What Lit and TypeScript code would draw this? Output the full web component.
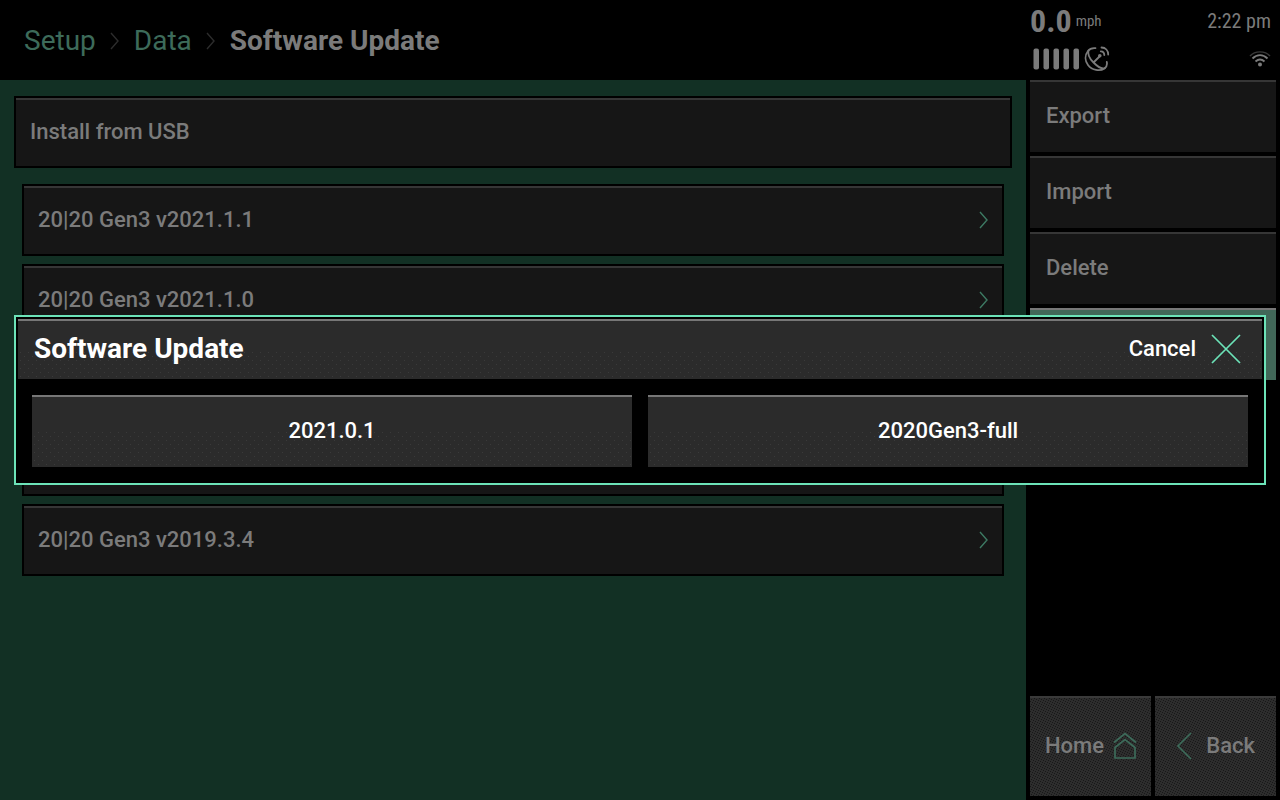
import { LitElement, html, css, svg } from "lit";
import { customElement } from "lit/decorators.js";

const chevron = svg`<path d="M1 1 L8 9 L1 17" fill="none" stroke="currentColor" stroke-width="1.400"/>`;

@customElement("app-root")
export class AppRoot extends LitElement {
  static styles = css`
    :host {
      display: block;
      font-family: Roboto, "Liberation Sans", sans-serif;
      color: #7b7b7b;
      background: #000;
      --line: #363636;
      --tile: #161616;
      --green: #3d6b5a;
      --dot: conic-gradient(from 0deg at 1px 1px, transparent 75%, #181818 0);
      --speck: conic-gradient(from 0deg at 1px 1px, transparent 75%, #3a3a3a 0);
    }
    * { box-sizing: border-box; }
    button {
      font: inherit;
      color: inherit;
      border: 0;
      border-radius: 0;
      margin: 0;
      cursor: pointer;
    }
    svg { display: block; flex: none; }
    .app {
      display: grid;
      grid-template-columns: 1fr 254px;
      min-height: 100vh;
    }
    .content { display: flex; flex-direction: column; }
    .crumbs {
      display: flex;
      align-items: center;
      gap: 14px;
      height: 80px;
      padding: 2px 24px 0;
      font-size: 28px;
      line-height: 32px;
    }
    .crumbs a { color: var(--green); text-decoration: none; }
    .crumbs svg { color: #2c2c2c; }
    .crumbs h1 { margin: 0; font-size: 28px; font-weight: 700; }
    .panel {
      flex: 1;
      background: #123024;
      padding: 16px 14px;
    }
    .list {
      display: flex;
      flex-direction: column;
      gap: 8px;
      padding: 16px 8px;
    }
    .row {
      display: flex;
      align-items: center;
      justify-content: space-between;
      width: 100%;
      height: 72px;
      padding: 0 14px;
      background: var(--tile);
      border: 2px solid #000;
      box-shadow: inset 0 2px var(--line);
      font-size: 22px;
      line-height: 26px;
      font-weight: 500;
      text-align: left;
    }
    .row svg { color: #3d7a63; }
    .side { display: flex; flex-direction: column; }
    .status {
      display: grid;
      grid-template-columns: 1fr auto;
      grid-template-rows: 34px 1fr;
      height: 80px;
      padding: 4px 9px 0 4px;
      align-items: center;
    }
    .speed, .time { font-family: "Roboto Condensed", Roboto, sans-serif; }
    .speed { display: flex; gap: 4px; align-items: center; }
    .speed b {
      font-size: 32px;
      line-height: 32px;
    }
    .speed span {
      font-size: 15px;
      line-height: 20px;
    }
    .time {
      font-size: 20px;
      line-height: 24px;
    }
    .signal { display: flex; gap: 4px; align-items: center; padding-left: 3px; }
    .wifi { justify-self: end; }
    .menu {
      display: flex;
      flex-direction: column;
      gap: 4px;
      padding: 0 4px;
    }
    .item {
      height: 72px;
      padding: 0 16px;
      background: var(--tile);
      box-shadow: inset 0 2px var(--line);
      font-size: 22px;
      line-height: 26px;
      font-weight: 500;
      text-align: left;
    }
    .item.active { background: #416758; box-shadow: inset 0 2px #777; }
    .nav {
      display: grid;
      grid-template-columns: 1fr 1fr;
      gap: 4px;
      padding: 4px;
      margin-top: auto;
    }
    .nav button {
      display: flex;
      align-items: center;
      justify-content: space-between;
      height: 100px;
      padding: 0 14px 0 15px;
      box-shadow: inset 0 2px #3a3a3a;
      background-color: #2d2d2d;
      background-image: var(--dot), var(--dot), var(--dot), var(--dot), var(--dot);
      background-size: 5px 5px;
      background-position: 0 0, 2px 1px, 4px 2px, 1px 3px, 3px 4px;
      font-size: 22px;
      line-height: 26px;
      font-weight: 500;
    }
    .nav .back { padding: 0 21px; }
    .nav svg { color: var(--green); }
    .veil {
      position: fixed;
      inset: 0;
      display: flex;
      align-items: center;
      padding: 0 14px;
    }
    .dialog {
      flex: 1;
      border: 2px solid #6ce3b8;
      background: #000;
      padding: 2px;
      color: #fff;
    }
    .head, .choices button {
      box-shadow: inset 0 2px #777;
      background-color: #2b2b2b;
      background-image: linear-gradient(#2b2b2b 50%, transparent 0), var(--speck), var(--speck);
      background-size: auto, 8px 8px, 8px 8px;
      background-position: 0 0, 2px 1px, 6px 5px;
    }
    .head {
      display: flex;
      align-items: center;
      justify-content: space-between;
      height: 60px;
      padding: 0 20px 0 16px;
    }
    .head h2 { margin: 0; font-size: 28px; line-height: 32px; font-weight: 700; }
    .cancel {
      display: flex;
      align-items: center;
      gap: 14px;
      padding: 0;
      background: none;
      font-size: 22px;
      line-height: 26px;
      font-weight: 500;
    }
    .cancel svg { color: #6ce3b8; }
    .choices {
      display: grid;
      grid-template-columns: 1fr 1fr;
      gap: 16px;
      padding: 16px 14px 14px;
    }
    .choices button {
      height: 72px;
      font-size: 22px;
      line-height: 26px;
      font-weight: 500;
    }
  `;

  private versions = [
    "20|20 Gen3 v2021.1.1",
    "20|20 Gen3 v2021.1.0",
    "",
    "",
    "20|20 Gen3 v2019.3.4",
  ];

  render() {
    return html`
      <div class="app">
        <main class="content">
          <nav class="crumbs" aria-label="Breadcrumb">
            <a href="#setup">Setup</a>
            <svg width="10" height="18" viewBox="0 0 10 18" aria-hidden="true">${chevron}</svg>
            <a href="#data">Data</a>
            <svg width="10" height="18" viewBox="0 0 10 18" aria-hidden="true">${chevron}</svg>
            <h1>Software Update</h1>
          </nav>
          <section class="panel">
            <button class="row">Install from USB</button>
            <div class="list">
              ${this.versions.map(
                (v) => html`<button class="row" aria-label=${v || "Version"}>
                  <span>${v}</span>
                  <svg width="9" height="18" viewBox="0 0 9 18" aria-hidden="true">${chevron}</svg>
                </button>`
              )}
            </div>
          </section>
        </main>
        <aside class="side">
          <div class="status">
            <div class="speed"><b>0.0</b><span>mph</span></div>
            <div class="time">2:22 pm</div>
            <div class="signal">
              <svg width="47" height="22" viewBox="0 0 47 22" fill="currentColor" aria-hidden="true">
                ${[0, 10, 20, 30, 40].map((x) => svg`<rect x=${x + 0.5} y="0.5" width="5.5" height="21" rx="2"/>`)}
              </svg>
              <svg width="26" height="26" viewBox="0 0 26 26" fill="none" stroke="currentColor" stroke-width="1.800" stroke-linecap="round" aria-hidden="true">
                <path d="M11.500 2.200 C8 1.800 5.500 3 4 5 C0.500 9.500 1 15 4 19 C8 24.500 16 25.500 20.500 22.500 C22.500 21 23.300 18.500 22.800 16"/>
                <path d="M4.500 4.500 C3.500 8 5.500 12.500 9.500 16.500 C13.500 20.500 18 23.500 21 22 M9.500 16.500 L15.500 10.500"/>
                <circle cx="15.800" cy="9.700" r="1.800" fill="currentColor" stroke="none"/>
                <path d="M16.800 5.300 C18.800 5.400 20.300 7 20.300 9 M17.500 1.500 C21.500 1.600 24.200 4.500 24.200 8.500"/>
              </svg>
            </div>
            <svg class="wifi" width="22" height="18" viewBox="0 0 22 18" fill="none" stroke="currentColor" stroke-width="1.900" aria-hidden="true">
              <path d="M1 6 C6 0.500 16 0.500 21 6" stroke="#3a3a3a" stroke-width="1.400"/>
              <path d="M3.500 8.500 C8 4 14 4 18.500 8.500 M6.500 11.500 C9.500 8.800 12.500 8.800 15.500 11.500"/>
              <circle cx="11" cy="14.500" r="2" fill="currentColor" stroke="none"/>
            </svg>
          </div>
          <div class="menu">
            <button class="item">Export</button>
            <button class="item">Import</button>
            <button class="item">Delete</button>
            <button class="item active" aria-label="Software Update"></button>
          </div>
          <div class="nav">
            <button>
              Home
              <svg width="24" height="28" viewBox="0 0 24 28" fill="none" stroke="currentColor" stroke-width="1.700" aria-hidden="true">
                <path d="M1 10.500 L12 1.500 L23 10.500 M2 15.500 L12 7.500 L22 15.500 V26 H2 Z"/>
              </svg>
            </button>
            <button class="back">
              <svg width="16" height="28" viewBox="0 0 16 28" fill="none" stroke="currentColor" stroke-width="1.700" aria-hidden="true">
                <path d="M15 1 L2 14 L15 27"/>
              </svg>
              Back
            </button>
          </div>
        </aside>
      </div>
      <div class="veil">
        <section class="dialog" role="dialog" aria-label="Software Update">
          <header class="head">
            <h2>Software Update</h2>
            <button class="cancel">
              Cancel
              <svg width="32" height="32" viewBox="0 0 32 32" fill="none" stroke="currentColor" stroke-width="1.700" aria-hidden="true">
                <path d="M2 2 L30 30 M30 2 L2 30"/>
              </svg>
            </button>
          </header>
          <div class="choices">
            <button>2021.0.1</button>
            <button>2020Gen3-full</button>
          </div>
        </section>
      </div>
    `;
  }
}
